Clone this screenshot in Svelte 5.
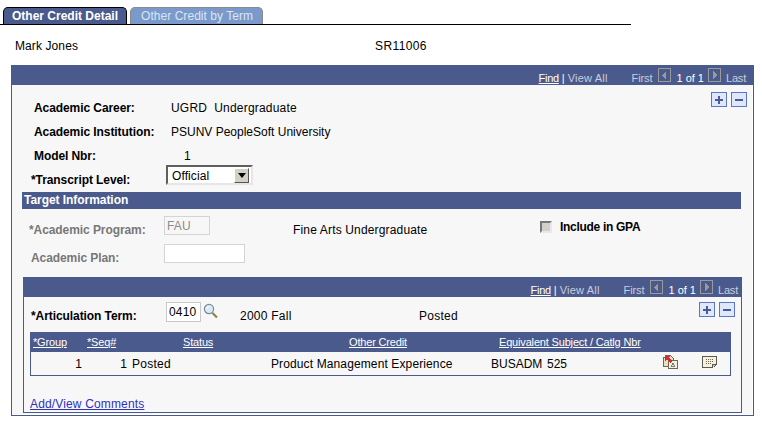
<script>
	const columns = ['*Group', '*Seq#', 'Status', 'Other Credit', 'Equivalent Subject / Catlg Nbr']
</script>

{#snippet pager()}
	<a class="find" href="#find">Find</a>
	<span class="sep">|</span>
	<span class="off view">View All</span>
	<span class="off first">First</span>
	<svg class="nav" width="14" height="14" viewBox="0 0 14 14" shape-rendering="crispEdges">
		<rect x="0.5" y="0.5" width="12" height="13" fill="#4b5a8c" stroke="#9a9a9a" />
		<path d="M4 7 8 3v9z" fill="#9a9a9a" />
	</svg>
	<span class="count">1 of 1</span>
	<svg class="nav" width="14" height="14" viewBox="0 0 14 14" shape-rendering="crispEdges">
		<rect x="0.5" y="0.5" width="12" height="13" fill="#4b5a8c" stroke="#9a9a9a" />
		<path d="M5 3l4 4-4 5z" fill="#9a9a9a" />
	</svg>
	<span class="off last">Last</span>
{/snippet}

{#snippet addRemove()}
	<div class="addrem">
		<button type="button" aria-label="Add row">
			<svg width="10" height="10" viewBox="0 0 10 10" shape-rendering="crispEdges"><path d="M4 1h2v3h3v2H6v3H4V6H1V4h3z" fill="#4b5a9c" /></svg>
		</button>
		<button type="button" aria-label="Delete row">
			<svg width="10" height="10" viewBox="0 0 10 10" shape-rendering="crispEdges"><path d="M1 4h8v2H1z" fill="#4b5a9c" /></svg>
		</button>
	</div>
{/snippet}

<div class="page">
	<div class="tabs">
		<span class="tab active">Other Credit Detail</span>
		<span class="tab">Other Credit by Term</span>
	</div>

	<div class="who">
		<span>Mark Jones</span>
		<span class="emplid">SR11006</span>
	</div>

	<section class="panel">
		<header class="bar outer-bar">{@render pager()}</header>
		<div class="body">
			<div class="top">
				<div class="facts">
					<div class="fact"><b>Academic Career:</b><span class="wide">UGRD&nbsp; Undergraduate</span></div>
					<div class="fact"><b>Academic Institution:</b><span>PSUNV PeopleSoft University</span></div>
					<div class="fact"><b>Model Nbr:</b><span class="nbr">1</span></div>
				</div>
				{@render addRemove()}
			</div>

			<div class="level">
				<b>*Transcript Level:</b>
				<div class="select">
					<span>Official</span>
					<i class="arrow"><svg width="8" height="5" viewBox="0 0 8 5"><path d="M0 0h8L4 5z" fill="#000" /></svg></i>
				</div>
			</div>

			<h2 class="band">Target Information</h2>

			<div class="target">
				<div class="program">
					<b class="muted">*Academic Program:</b>
					<input class="field fau" value="FAU" disabled />
					<span class="descr">Fine Arts Undergraduate</span>
					<label class="gpa"><i class="check"></i><b>Include in GPA</b></label>
				</div>
				<div class="plan">
					<b class="muted">Academic Plan:</b>
					<input class="field planfield" disabled />
				</div>
			</div>

			<section class="inner">
				<header class="bar inner-bar">{@render pager()}</header>
				<div class="term">
					<b>*Articulation Term:</b>
					<input class="field termfield" value="0410" readonly />
					<svg class="glass" width="15" height="16" viewBox="0 0 15 16">
						<circle cx="6" cy="6" r="4.6" fill="#d8eaf6" stroke="#7d8a94" stroke-width="1.2" />
						<path d="M3.500 6a3 3 0 0 1 2.500-2.500" fill="none" stroke="#fff" />
						<path d="M9.500 10l4.500 4.500" stroke="#8a8350" stroke-width="2.200" />
					</svg>
					<span class="termname">2000 Fall</span>
					<span class="termstatus">Posted</span>
					{@render addRemove()}
				</div>

				<div class="grid">
					<div class="grid-head">
						{#each columns as col}
							<a href="#sort">{col}</a>
						{/each}
					</div>
					<div class="grid-row">
						<span class="num">1</span>
						<span class="num">1</span>
						<span class="status">Posted</span>
						<span>Product Management Experience</span>
						<span class="subject">BUSADM&nbsp; 525</span>
						<svg class="translate" width="17" height="16" viewBox="0 0 17 16" shape-rendering="crispEdges">
							<path d="M1.500 3.500h2v-2h5l3 3v8h-10z" fill="#e8e0c0" stroke="#6a6a50" />
							<path d="M6.500 6.500h9v8h-9z" fill="#f6f1da" stroke="#6a6a50" />
							<path d="M9 13l2-4 2 4M10 12h2" fill="none" stroke="#777" />
							<path d="M3 2h5L6.500 3.500 10 7 8 9 4.500 5.500 3 7z" fill="#d8283c" />
						</svg>
						<svg class="note" width="17" height="14" viewBox="0 0 17 14" shape-rendering="crispEdges">
							<path d="M1.500 1.500h14v8l-4 3h-10z" fill="#f6f1da" stroke="#5a5a50" />
							<path d="M11.500 12.500v-3h4" fill="#cfc8aa" stroke="#5a5a50" />
							<path d="M5 4.500h8M5 6.500h8M5 8.500h5" stroke="#6a6a60" stroke-dasharray="1 1" />
						</svg>
					</div>
				</div>

				<a class="comments" href="#comments">Add/View Comments</a>
			</section>
		</div>
	</section>
</div>

<style>
	:global(body) {
		margin: 0;
		background: #fff;
	}

	.page {
		width: 762px;
		height: 423px;
		overflow: hidden;
		font-family: 'Liberation Sans', Arial, sans-serif;
		font-size: 12px;
		color: #000;
	}

	b {
		letter-spacing: -0.08px;
	}

	.tabs {
		display: flex;
		gap: 3px;
		width: 628px;
		height: 17px;
		padding: 7px 0 0 3px;
		border-bottom: 1px solid #000;
	}

	.tab {
		width: 133px;
		height: 17px;
		box-sizing: border-box;
		padding-left: 10px;
		line-height: 16px;
		border: 1px solid #8a8a8a;
		border-bottom: none;
		border-radius: 5px 5px 0 0;
		background: #7a9acb;
		color: #dbe5f3;
		letter-spacing: 0.05px;
	}

	.tab.active {
		width: 124px;
		padding-left: 8px;
		border-color: #000;
		background: #4b5a8c;
		color: #fff;
		font-weight: bold;
		letter-spacing: 0;
	}

	.who {
		display: grid;
		grid-template-columns: 360px auto;
		justify-content: start;
		padding: 13px 0 0 15px;
		height: 27px;
		line-height: 16px;
		letter-spacing: 0.1px;
	}

	.emplid {
		letter-spacing: 0.4px;
	}

	.panel {
		width: 741px;
		height: 350px;
		margin: 0 0 0 11px;
		border: 1px solid #4b5a8c;
		border-top: none;
		background: #fff;
	}

	.bar {
		display: flex;
		align-items: flex-end;
		justify-content: flex-end;
		height: 20px;
		background: #4b5a8c;
		color: #fff;
		font-size: 11px;
		line-height: 13px;
	}

	.outer-bar {
		margin: 0 -1px;
		padding-right: 8px;
	}

	.inner-bar {
		margin: 0 -1px;
		padding-right: 4px;
	}

	.bar .find {
		color: #fff;
		letter-spacing: -0.3px;
		font-size: 11px;
	}

	.sep {
		margin: 0 3px 0 3px;
	}

	.off {
		color: #c9cddc;
	}

	.view {
		letter-spacing: 0.2px;
	}

	.first {
		margin-left: 24px;
		margin-right: 6px;
		letter-spacing: -0.1px;
	}

	.nav {
		margin-bottom: 3px;
	}

	.count {
		margin: 0 4px;
	}

	.last {
		margin-left: 4px;
		letter-spacing: -0.2px;
	}

	.body {
		box-sizing: border-box;
		height: 329px;
		margin-right: 1px;
		padding: 7px 0 0;
		background: #f7f7f7;
	}

	.top {
		display: grid;
		grid-template-columns: 1fr auto;
		height: 73px;
		padding-right: 5px;
	}

	.addrem {
		display: flex;
		gap: 4px;
	}

	.addrem button {
		display: grid;
		place-items: center;
		width: 16px;
		height: 15px;
		padding: 0;
		border: 1px solid #5b76c4;
		background: #dfe8fb;
	}

	.facts {
		padding: 4px 0 0 22px;
	}

	.fact {
		display: grid;
		grid-template-columns: 137px auto;
		height: 24px;
		line-height: 24px;
	}

	.fact span {
		padding-top: 1px;
		line-height: 23px;
	}

	.fact .wide {
		letter-spacing: 0.2px;
	}

	.nbr {
		padding-left: 13px;
	}

	.level {
		display: grid;
		grid-template-columns: 135px auto;
		align-items: start;
		justify-content: start;
		height: 27px;
		padding-left: 19px;
	}

	.level b {
		padding-top: 8px;
	}

	.select {
		display: flex;
		justify-content: space-between;
		align-items: center;
		box-sizing: border-box;
		width: 87px;
		height: 20px;
		padding: 1px 2px 0 4px;
		border: 2px solid;
		border-color: #5f5f5f #e6e6e6 #e6e6e6 #5f5f5f;
		background: #fff;
		letter-spacing: 0.1px;
	}

	.arrow {
		display: grid;
		place-items: center;
		width: 15px;
		height: 15px;
		margin-top: -1px;
		background: #d4d0c8;
		border: 1px solid;
		border-color: #fff #555 #555 #fff;
		box-sizing: border-box;
	}

	.band {
		height: 17px;
		margin: 0 11px 0 10px;
		padding-left: 2px;
		background: #4b5a8c;
		color: #fff;
		font-size: 12px;
		line-height: 17px;
		letter-spacing: -0.05px;
	}

	.target {
		height: 68px;
	}

	.muted {
		color: #777;
	}

	.program {
		display: grid;
		grid-template-columns: 135px 129px 247px auto;
		align-items: start;
		justify-content: start;
		height: 35px;
		padding: 7px 0 0 17px;
		box-sizing: border-box;
	}

	.program > b {
		padding-top: 7px;
	}

	.field {
		box-sizing: border-box;
		height: 19px;
		padding: 0 2px;
		border: 1px solid #d4d4d4;
		background: #fff;
		font: inherit;
		letter-spacing: 0.2px;
		color: #000;
		outline: none;
	}

	.field:disabled {
		color: #8a8a8a;
		opacity: 1;
		-webkit-text-fill-color: #8a8a8a;
	}

	.fau {
		width: 46px;
		background: #f7f7f7;
	}

	.descr {
		padding-top: 7px;
		letter-spacing: 0.16px;
	}

	.gpa {
		display: flex;
		align-items: center;
		gap: 8px;
		margin-top: 4px;
	}

	.gpa b {
		letter-spacing: -0.3px;
	}

	.check {
		width: 12px;
		height: 12px;
		box-sizing: border-box;
		border: 2px solid;
		border-color: #777 #e8e8e8 #e8e8e8 #777;
		background: #d4d0c8;
	}

	.plan {
		display: grid;
		grid-template-columns: 133px auto;
		justify-content: start;
		padding-left: 19px;
	}

	.plan b {
		padding-top: 7px;
	}

	.planfield {
		width: 81px;
	}

	.inner {
		box-sizing: border-box;
		width: 719px;
		height: 136px;
		margin-left: 11px;
		border: 1px solid #4b5a8c;
		border-top: none;
	}

	.term {
		display: grid;
		grid-template-columns: 135px 37px 37px 179px 280px auto;
		align-items: start;
		justify-content: start;
		height: 35px;
		padding: 5px 0 0 7px;
		box-sizing: border-box;
	}

	.term b {
		padding-top: 7px;
	}

	.termfield {
		width: 35px;
		height: 20px;
		padding: 0 2px;
		border-color: #c8c8c8;
	}

	.glass {
		margin-top: 1px;
	}

	.termname,
	.termstatus {
		padding-top: 7px;
		letter-spacing: 0.25px;
	}

	.grid {
		width: 699px;
		height: 43px;
		margin-left: 6px;
		border: 1px solid #4b5a8c;
		border-top: none;
	}

	.grid-head {
		display: grid;
		grid-template-columns: 54px 96px 166px 150px auto;
		margin: 0 -1px;
		padding-left: 3px;
		height: 20px;
		line-height: 20px;
		background: #4b5a8c;
		font-size: 11px;
		letter-spacing: -0.17px;
	}

	.grid-head a {
		color: #fff;
	}

	.grid-row {
		display: grid;
		grid-template-columns: 51px 45px 144px 220px 171px 39px auto;
		align-items: center;
		height: 23px;
		letter-spacing: 0.12px;
	}

	.num {
		text-align: right;
	}

	.status {
		padding-left: 5px;
		letter-spacing: 0.25px;
	}

	.subject {
		letter-spacing: 0;
		word-spacing: -1px;
	}

	.translate {
		align-self: start;
		margin-top: 2px;
	}

	.note {
		align-self: start;
		margin-top: 3px;
	}

	.comments {
		display: block;
		margin: 21px 0 0 6px;
		color: #3030c0;
		letter-spacing: 0.15px;
	}
</style>
